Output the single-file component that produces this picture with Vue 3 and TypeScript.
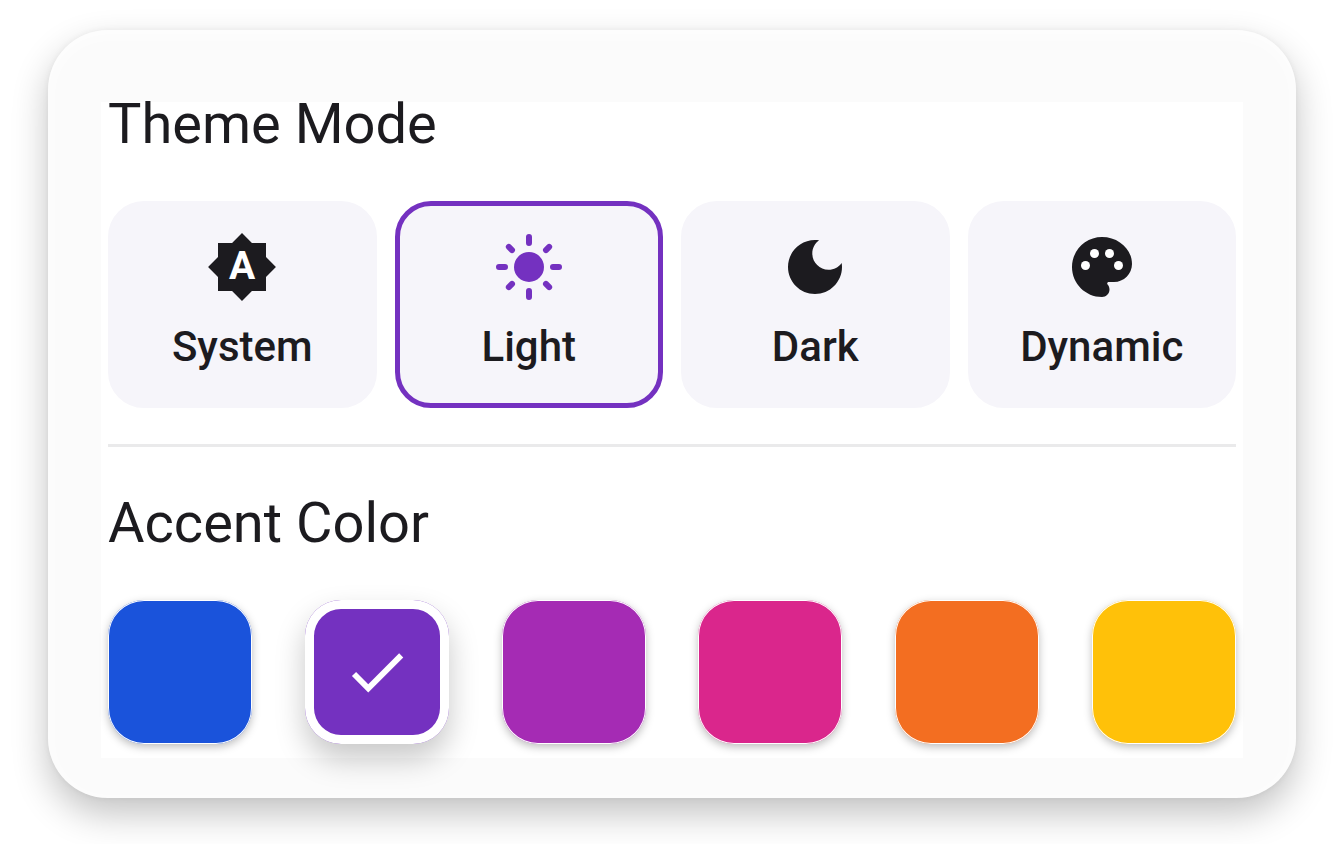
<script setup lang="ts">
import { ref } from 'vue'

type Mode = 'system' | 'light' | 'dark' | 'dynamic'

const modes: { id: Mode; label: string }[] = [
  { id: 'system', label: 'System' },
  { id: 'light', label: 'Light' },
  { id: 'dark', label: 'Dark' },
  { id: 'dynamic', label: 'Dynamic' },
]

const accents = ['blue', 'violet', 'purple', 'pink', 'orange', 'amber']

const mode = ref<Mode>('light')
const accent = ref('violet')
</script>

<template>
  <main class="page">
    <section class="card">
      <div class="panel">
        <h2 id="mode-title" class="title">Theme Mode</h2>
        <div class="modes" role="group" aria-labelledby="mode-title">
          <button
            v-for="m in modes"
            :key="m.id"
            type="button"
            class="mode"
            :class="{ selected: mode === m.id }"
            :aria-pressed="mode === m.id"
            @click="mode = m.id"
          >
            <svg v-if="m.id === 'system'" class="icon" viewBox="0 0 24 24" aria-hidden="true">
              <path d="M20 8.69V4h-4.69L12 .69 8.69 4H4v4.69L.69 12 4 15.31V20h4.69L12 23.31 15.31 20H20v-4.69L23.31 12z" />
              <text class="auto" x="12" y="16" text-anchor="middle">A</text>
            </svg>
            <svg v-else-if="m.id === 'light'" class="icon" viewBox="0 0 24 24" aria-hidden="true">
              <circle cx="12" cy="12" r="5" />
              <path
                class="rays"
                d="M12 2v2M12 20v2M2 12h2M20 12h2M5.28 5.28l1.06 1.06M17.66 17.66l1.06 1.06M18.72 5.28l-1.06 1.06M6.34 17.66l-1.06 1.06"
              />
            </svg>
            <svg v-else-if="m.id === 'dark'" class="icon" viewBox="0 0 24 24" aria-hidden="true">
              <path d="M12 3c-4.97 0-9 4.03-9 9s4.03 9 9 9 9-4.03 9-9c0-.46-.04-.92-.1-1.36-.98 1.37-2.58 2.26-4.4 2.26-2.98 0-5.4-2.42-5.4-5.4 0-1.81.89-3.42 2.26-4.4C12.92 3.04 12.46 3 12 3z" />
            </svg>
            <svg v-else class="icon" viewBox="0 0 24 24" aria-hidden="true">
              <path d="M12 2C6.49 2 2 6.49 2 12s4.49 10 10 10c1.38 0 2.5-1.12 2.5-2.5 0-.61-.23-1.2-.64-1.67-.08-.1-.13-.21-.13-.33 0-.28.22-.5.5-.5H16c3.31 0 6-2.69 6-6 0-4.96-4.49-9-10-9z" />
              <g class="dots">
                <circle cx="6.5" cy="11.5" r="1.5" />
                <circle cx="9.5" cy="7.5" r="1.5" />
                <circle cx="14.5" cy="7.5" r="1.5" />
                <circle cx="17.5" cy="11.5" r="1.5" />
              </g>
            </svg>
            <span class="label">{{ m.label }}</span>
          </button>
        </div>
        <hr class="divider" />
        <h2 id="accent-title" class="title">Accent Color</h2>
        <div class="accents" role="group" aria-labelledby="accent-title">
          <button
            v-for="a in accents"
            :key="a"
            type="button"
            class="swatch"
            :class="[a, { selected: accent === a }]"
            :aria-label="a"
            :aria-pressed="accent === a"
            @click="accent = a"
          >
            <svg v-if="accent === a" class="check" viewBox="0 0 24 24" aria-hidden="true">
              <path d="M9 16.17L4.83 12l-1.42 1.41L9 19 21 7l-1.41-1.41z" />
            </svg>
          </button>
        </div>
      </div>
    </section>
  </main>
</template>

<style>
body {
  background: #ffffff;
}
</style>

<style scoped>
.page {
  padding: 30px 48px 46px;
  font-family: Roboto, "Liberation Sans", sans-serif;
  color: #1c1b1f;
}
.card {
  padding: 72px 53px 40px;
  border-radius: 60px;
  background: #fbfbfb;
  box-shadow:
    0 16px 36px rgba(0, 0, 0, 0.24),
    0 0 6px rgba(0, 0, 0, 0.05),
    inset 0 4px 20px rgba(255, 255, 255, 0.8);
}
.panel {
  padding: 0 7px 14px;
  background: #ffffff;
}
.title {
  margin: 0 0 55px;
  font-size: 56px;
  font-weight: 400;
  line-height: 44px;
}
.modes {
  display: grid;
  grid-template-columns: repeat(4, 1fr);
  gap: 18px;
}
.mode {
  display: flex;
  flex-direction: column;
  align-items: center;
  gap: 14px;
  padding: 25px 0 26px;
  border: 5px solid #f6f5fa;
  border-radius: 36px;
  background: #f6f5fa;
  color: inherit;
  font-family: inherit;
  cursor: pointer;
}
.mode.selected {
  border-color: #7431c0;
}
.icon {
  width: 72px;
  height: 72px;
  fill: #1c1b1f;
}
.selected .icon {
  fill: #7431c0;
}
.icon .auto {
  fill: #ffffff;
  font-size: 13px;
  font-weight: 700;
}
.rays {
  fill: none;
  stroke: #1c1b1f;
  stroke-width: 2;
  stroke-linecap: round;
}
.selected .rays {
  stroke: #7431c0;
}
.dots {
  fill: #ffffff;
}
.label {
  font-size: 42px;
  font-weight: 500;
  line-height: 60px;
}
.divider {
  height: 3px;
  margin: 36px 0 54px;
  border: 0;
  background: #eaeaeb;
}
.accents {
  display: flex;
  justify-content: space-between;
}
.swatch {
  display: grid;
  place-items: center;
  width: 144px;
  height: 144px;
  padding: 0;
  border: 0;
  border-radius: 36px;
  box-shadow: 0 3px 9px rgba(0, 0, 0, 0.26), inset 0 0 0 1px #ffffff;
  cursor: pointer;
}
.swatch.selected {
  box-shadow: 0 15px 30px rgba(0, 0, 0, 0.22), inset 0 0 0 9px #ffffff;
}
.check {
  width: 70px;
  height: 70px;
  fill: #ffffff;
}
.blue {
  background-color: #1a53db;
}
.violet {
  background-color: #7431c0;
}
.purple {
  background-color: #a52bb4;
}
.pink {
  background-color: #da268c;
}
.orange {
  background-color: #f36e21;
}
.amber {
  background-color: #ffc109;
}
</style>
